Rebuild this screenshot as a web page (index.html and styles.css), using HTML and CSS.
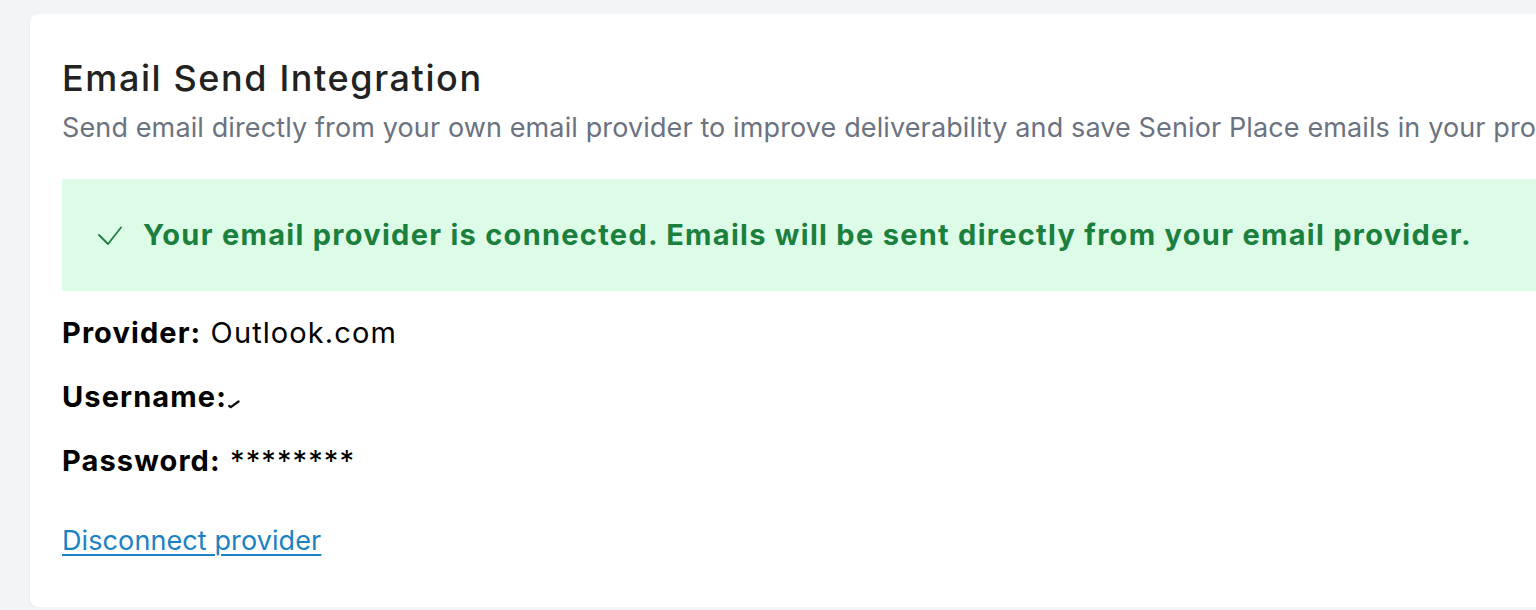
FILE: index.html
```html
<!DOCTYPE html>
<html lang="en">
<head>
<meta charset="utf-8">
<title>Email Send Integration</title>
<link rel="stylesheet" href="styles.css">
</head>
<body>
<main class="page">
  <section class="card">
    <h1 class="title">Email Send Integration</h1>
    <p class="subtitle">Send email directly from your own email provider to improve deliverability and save Senior Place emails in your provider's sent folder.</p>
    <div class="alert">
      <svg class="check" width="24" height="19" viewBox="0 0 24 19" aria-hidden="true"><path d="M1 9 L10 18 L23 1.5" fill="none" stroke="#1b7f3d" stroke-width="1.8" stroke-linecap="round" stroke-linejoin="round"/></svg>
      <span class="alert-text">Your email provider is connected. Emails will be sent directly from your email provider.</span>
    </div>
    <div class="details">
      <p class="row"><strong>Provider:</strong> Outlook.com</p>
      <p class="row"><strong>Username:</strong><svg class="redact" width="12" height="11" viewBox="0 0 12 11" aria-hidden="true"><path d="M1.2 8 L2.8 9.2 L10.5 3.5" fill="none" stroke="#111" stroke-width="2.3" stroke-linecap="round" stroke-linejoin="round"/></svg></p>
      <p class="row"><strong>Password:</strong> ********</p>
    </div>
    <a class="link" href="#">Disconnect provider</a>
  </section>
</main>
</body>
</html>
```

FILE: styles.css
```css
html, body {
  margin: 0;
  padding: 0;
  overflow: hidden;
  background: #f3f4f6;
  font-family: Inter, "Noto Sans", "Liberation Sans", sans-serif;
}
.page {
  width: 1800px;
  padding: 14px 0 0 30px;
}
.card {
  background: #ffffff;
  border-radius: 8px;
  box-shadow: 0 1px 3px rgba(0,0,0,0.08);
  padding: 44px 32px 50px 32px;
  display: flex;
  flex-direction: column;
  align-items: flex-start;
}
.title {
  margin: 0;
  font-size: 36px;
  line-height: 40px;
  font-weight: 500;
  color: #222222;
  letter-spacing: 1.6px;
}
.subtitle {
  margin: 14px 0 0 0;
  font-size: 27px;
  line-height: 32px;
  color: #6b7280;
  white-space: nowrap;
  letter-spacing: 0.12px;
}
.alert {
  margin-top: 35px;
  align-self: stretch;
  height: 112px;
  box-sizing: border-box;
  background: #dcfce7;
  display: flex;
  align-items: center;
  padding: 0 0 0 36px;
  gap: 21px;
}
.check { flex: none; margin-top: 1px; }
.alert-text {
  font-size: 29px;
  line-height: 36px;
  font-weight: 700;
  color: #1b7f3d;
  white-space: nowrap;
  letter-spacing: 1.28px;
}
.details {
  margin-top: 24px;
  display: flex;
  flex-direction: column;
  gap: 28px;
}
.row {
  margin: 0;
  font-size: 29px;
  line-height: 36px;
  color: #000000;
  white-space: nowrap;
  letter-spacing: 1.1px;
}
.row strong { font-weight: 700; }
.redact { margin-left: 1px; vertical-align: -2px; }
.link {
  margin-top: 46px;
  font-size: 27px;
  line-height: 32px;
  color: #1a82c4;
  text-decoration: underline;
  text-underline-offset: 4px;
  text-decoration-thickness: 2px;
  letter-spacing: 0.1px;
}
```
